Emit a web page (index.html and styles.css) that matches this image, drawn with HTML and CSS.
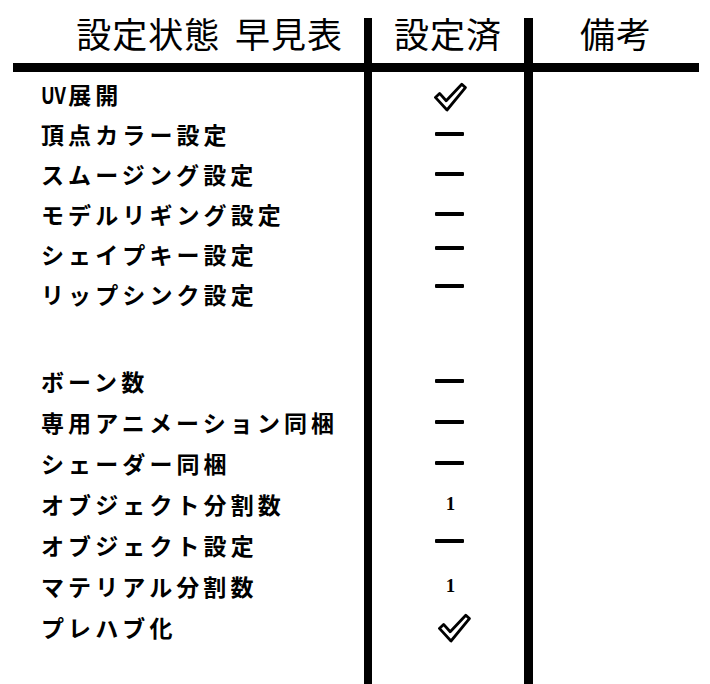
FILE: index.html
```html
<!DOCTYPE html>
<html lang="ja">
<head>
<meta charset="utf-8">
<title>設定状態 早見表</title>
<link rel="stylesheet" href="styles.css">
</head>
<body>
<div class="sheet">
  <div class="head">
    <div class="head-cell head-title">設定状態 早見表</div>
    <div class="head-cell head-status">設定済</div>
    <div class="head-cell head-note">備考</div>
  </div>
  <div class="rule"></div>
  <div class="table-body">
    <div class="col labels">
      <div class="row"><span class="latin">UV</span>展開</div>
      <div class="row">頂点カラー設定</div>
      <div class="row">スムージング設定</div>
      <div class="row">モデルリギング設定</div>
      <div class="row">シェイプキー設定</div>
      <div class="row">リップシンク設定</div>
      <div class="gap"></div>
      <div class="row wide">ボーン数</div>
      <div class="row wide">専用アニメーション同梱</div>
      <div class="row wide">シェーダー同梱</div>
      <div class="row wide">オブジェクト分割数</div>
      <div class="row wide">オブジェクト設定</div>
      <div class="row wide">マテリアル分割数</div>
      <div class="row wide">プレハブ化</div>
    </div>
    <div class="col status">
      <div class="row mark"><svg class="check low" viewBox="0 0 34 30" width="34" height="30"><path d="M2.4 15.4 L6.6 11.4 L13.2 18.8 L28.8 2.2 L32.4 5.6 L14 28 Z" fill="#fff" stroke="#000" stroke-width="2.8" stroke-linejoin="round"/></svg></div>
      <div class="row mark"><span class="dash"></span></div>
      <div class="row mark"><span class="dash"></span></div>
      <div class="row mark"><span class="dash"></span></div>
      <div class="row mark"><span class="dash up6"></span></div>
      <div class="row mark"><span class="dash up8"></span></div>
      <div class="gap"></div>
      <div class="row wide mark"><span class="dash"></span></div>
      <div class="row wide mark"><span class="dash"></span></div>
      <div class="row wide mark"><span class="dash"></span></div>
      <div class="row wide mark"><span class="num">1</span></div>
      <div class="row wide mark"><span class="dash up4"></span></div>
      <div class="row wide mark"><span class="num">1</span></div>
      <div class="row wide mark"><svg class="check right" viewBox="0 0 34 30" width="34" height="30"><path d="M2.4 15.4 L6.6 11.4 L13.2 18.8 L28.8 2.2 L32.4 5.6 L14 28 Z" fill="#fff" stroke="#000" stroke-width="2.8" stroke-linejoin="round"/></svg></div>
    </div>
    <div class="col notes"></div>
  </div>
</div>
</body>
</html>
```

FILE: styles.css
```css
html, body {
  margin: 0;
  padding: 0;
  background: #fff;
}

body {
  font-family: "Noto Sans CJK JP", "Noto Sans", sans-serif;
  color: #000;
  overflow: hidden;
}

.sheet {
  margin-left: 13px;
  width: 686px;
  padding-top: 18px;
}

.head {
  display: flex;
  height: 45px;
}

.head-cell {
  font-size: 35px;
  line-height: 30px;
  font-weight: 400;
  letter-spacing: 1px;
}

.head-title {
  width: 330px;
  padding-right: 21px;
  text-align: right;
  word-spacing: 6px;
}

.head-status {
  width: 152px;
  border-left: 8px solid #000;
  border-right: 9px solid #000;
  text-align: center;
}

.head-note {
  flex: 1;
  text-align: center;
}

.rule {
  height: 9px;
  background: #000;
}

.table-body {
  display: flex;
  height: 612px;
}

.col {
  padding-top: 2px;
}

.labels {
  width: 323px;
  padding-left: 28px;
  font-size: 23px;
  font-weight: 700;
  letter-spacing: 4.1px;
  white-space: nowrap;
}

.status {
  width: 149px;
  padding-left: 3px;
  border-left: 8px solid #000;
  border-right: 9px solid #000;
}

.notes {
  flex: 1;
}

.row {
  height: 40px;
  display: flex;
  align-items: center;
}

.row.wide {
  height: 41px;
}

.gap {
  height: 46px;
}

.mark {
  justify-content: center;
}

.latin {
  display: inline-block;
  letter-spacing: 0;
  transform: scaleX(0.8);
  transform-origin: left center;
  margin-right: -4px;
}

.dash {
  display: block;
  width: 29px;
  height: 4px;
  background: #000;
  border-radius: 1px;
}

.up4 { margin-bottom: 8px; }
.up6 { margin-bottom: 12px; }
.up8 { margin-bottom: 16px; }

.num {
  font-family: "Liberation Serif", serif;
  font-weight: 700;
  font-size: 19px;
  line-height: 1;
  margin-left: 2px;
}

.check {
  display: block;
}

.check.low {
  margin-top: 6px;
}

.check.right {
  margin-left: 9px;
  margin-top: 2px;
}
```
